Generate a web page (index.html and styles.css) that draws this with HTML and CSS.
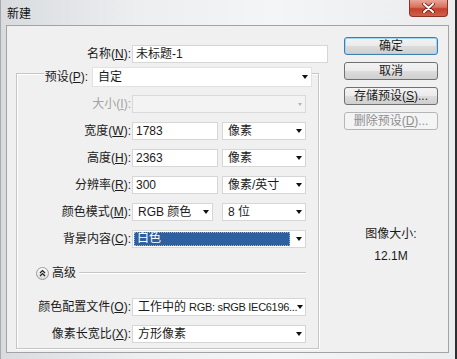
FILE: index.html
```html
<!DOCTYPE html>
<html>

<head>
  <title>新建</title>
  <link rel="stylesheet" href="styles.css">
</head>

<body>
  <div class="window">
    <div class="titlebar">
      <span class="title">新建</span>
      <div class="close-btn">
        <svg width="13" height="10" viewBox="0 0 13 10">
          <path d="M2 1 L11 9 M11 1 L2 9" stroke="#6b1a12" stroke-width="3.6" stroke-linecap="round" />
          <path d="M2 1 L11 9 M11 1 L2 9" stroke="#fff" stroke-width="2" stroke-linecap="round" />
        </svg>
      </div>
    </div>

    <div class="panel">
      <div class="main">
        <div class="row">
          <label class="lbl lbl-name">名称(<u>N</u>):</label>
          <div class="field field-name">未标题-1</div>
        </div>

        <div class="group">
          <div class="group-head">
            <label class="lbl lbl-preset">预设(<u>P</u>):</label>
            <div class="field select select-preset">自定<span class="arrow"></span></div>
          </div>

          <div class="row row-first">
            <label class="lbl lbl-group disabled">大小(<u>I</u>):</label>
            <div class="field select select-full is-disabled"><span class="arrow"></span></div>
          </div>
          <div class="row">
            <label class="lbl lbl-group">宽度(<u>W</u>):</label>
            <div class="field field-num">1783</div>
            <div class="field select select-unit">像素<span class="arrow"></span></div>
          </div>
          <div class="row">
            <label class="lbl lbl-group">高度(<u>H</u>):</label>
            <div class="field field-num">2363</div>
            <div class="field select select-unit">像素<span class="arrow"></span></div>
          </div>
          <div class="row">
            <label class="lbl lbl-group">分辨率(<u>R</u>):</label>
            <div class="field field-num">300</div>
            <div class="field select select-unit">像素/英寸<span class="arrow"></span></div>
          </div>
          <div class="row">
            <label class="lbl lbl-group">颜色模式(<u>M</u>):</label>
            <div class="field select select-mode">RGB 颜色<span class="arrow"></span></div>
            <div class="field select select-unit">8 位<span class="arrow"></span></div>
          </div>
          <div class="row">
            <label class="lbl lbl-group">背景内容(<u>C</u>):</label>
            <div class="field select select-full is-focused">
              <span class="highlight">白色</span><span class="arrow"></span>
            </div>
          </div>

          <div class="advanced">
            <svg class="adv-icon" width="13" height="13" viewBox="0 0 13 13">
              <defs>
                <linearGradient id="advg" x1="0" y1="0" x2="0" y2="1">
                  <stop offset="0" stop-color="#ffffff" />
                  <stop offset="1" stop-color="#d9d9d9" />
                </linearGradient>
              </defs>
              <circle cx="6.5" cy="6.5" r="6" fill="url(#advg)" stroke="#9a9a9a" />
              <path d="M4 6 L6.5 3.6 L9 6 M4 9 L6.5 6.6 L9 9" fill="none" stroke="#222" stroke-width="1.3" />
            </svg>
            <span class="adv-label">高级</span>
            <span class="adv-line"></span>
          </div>

          <div class="row row-profile">
            <label class="lbl lbl-group">颜色配置文件(<u>O</u>):</label>
            <div class="field select select-full">工作中的 <span class="profile-text">RGB: sRGB IEC6196...</span><span class="arrow"></span></div>
          </div>
          <div class="row">
            <label class="lbl lbl-group">像素长宽比(<u>X</u>):</label>
            <div class="field select select-full">方形像素<span class="arrow"></span></div>
          </div>
        </div>
      </div>

      <div class="side">
        <div class="btn btn-default">确定</div>
        <div class="btn">取消</div>
        <div class="btn">存储预设(<u>S</u>)...</div>
        <div class="btn btn-disabled">删除预设(<u>D</u>)...</div>

        <div class="size-info">
          <div>图像大小:</div>
          <div class="size-value">12.1M</div>
        </div>
      </div>
    </div>
  </div>
</body>

</html>
```

FILE: styles.css
```css
body {
  margin: 0;
  background: #e9ebee;
  font-family: "Liberation Sans", "Noto Sans CJK SC", sans-serif;
  font-size: 12px;
  color: #1a1a1a;
}

u {
  text-decoration: underline;
  text-underline-offset: 1px;
}

.window {
  width: 457px;
  height: 359px;
  box-sizing: border-box;
  border-left: 1px solid #a7abb0;
  border-right: 2px solid #2f2f2f;
  background: linear-gradient(90deg, #d9dcdf 0%, #eceef0 30%, #f4f5f6 60%, #eaecee 100%);
  display: flex;
  flex-direction: column;
}

/* title bar */
.titlebar {
  height: 25px;
  display: flex;
  align-items: flex-start;
  flex-shrink: 0;
}

.title {
  padding: 6px 0 0 6px;
  line-height: 16px;
  color: #111;
}

.close-btn {
  margin-left: auto;
  margin-right: 7px;
  width: 39px;
  height: 17px;
  box-sizing: border-box;
  border: 1px solid #8c3328;
  border-top: 0;
  border-radius: 0 0 4px 4px;
  background: linear-gradient(#e9a596 0%, #d9705d 45%, #c4402c 55%, #d0604a 100%);
  display: flex;
  align-items: center;
  justify-content: center;
}

/* main panel */
.panel {
  margin: 0 6px 0 5px;
  height: 328px;
  box-sizing: border-box;
  border: 1px solid #a3a3a3;
  background: #f0f0f0;
  display: flex;
}

.main {
  width: 322px;
  padding-top: 10px;
}

.row {
  display: flex;
  align-items: center;
  height: 18px;
  margin-top: 9px;
}

.lbl {
  flex-shrink: 0;
  text-align: right;
  line-height: 16px;
  white-space: nowrap;
}

.lbl.disabled {
  color: #a3a3a3;
}

.lbl-name {
  width: 124px;
}

.lbl-group {
  width: 114px;
}

.field {
  box-sizing: border-box;
  height: 18px;
  margin-left: 1px;
  padding-left: 3px;
  line-height: 16px;
  background: #fff;
  border: 1px solid #d6d6d6;
  white-space: nowrap;
  overflow: hidden;
}

.field-name {
  width: 196px;
}

.field-num {
  width: 86px;
}

.select {
  display: flex;
  align-items: center;
  padding-right: 3px;
  padding-left: 5px;
}

.arrow {
  margin-left: auto;
  flex-shrink: 0;
  width: 0;
  height: 0;
  border-left: 3.5px solid transparent;
  border-right: 3.5px solid transparent;
  border-top: 4px solid #111;
}

.select-unit {
  width: 84px;
  margin-left: 4px;
}

.select-mode {
  width: 81px;
  margin-right: 5px;
}

.select-full {
  width: 174px;
}

.select.is-disabled {
  background: #f3f3f3;
  border-color: #d9d9d9;
}

.select.is-disabled .arrow {
  border-left-width: 2.5px;
  border-right-width: 2.5px;
  border-top: 3px solid #b5b5b5;
}

.select.is-focused {
  padding-left: 1px;
}

.highlight {
  width: 156px;
  height: 14px;
  box-sizing: border-box;
  padding-left: 3px;
  line-height: 13px;
  color: #fff;
  background: #2e5f9f;
  outline: 1px dotted #9bb4d4;
  outline-offset: -1px;
}

.profile-text {
  margin-left: 3px;
  font-size: 11px;
  letter-spacing: -0.3px;
}

/* group box */
.group {
  margin: 10px 0 0 9px;
  width: 303px;
  box-sizing: border-box;
  border: 1px solid #c6c6c6;
  box-shadow: 1px 1px 0 #fff, inset 1px 1px 0 #fff;
  padding-bottom: 5px;
}

.group-head {
  display: flex;
  align-items: center;
  height: 20px;
  margin: -7px 0 0 27px;
}

.lbl-preset {
  width: 48px;
  box-sizing: border-box;
  padding-right: 4px;
  background: #f0f0f0;
}

.select-preset {
  width: 220px;
  height: 20px;
  margin-left: 0;
  border-color: #e2e2e2;
}

.row-first {
  margin-top: 8px;
}

.advanced {
  display: flex;
  align-items: center;
  height: 14px;
  margin: 18px 12px 0 19px;
}

.adv-label {
  margin-left: 3px;
  line-height: 14px;
}

.adv-line {
  flex: 1;
  margin-left: 3px;
  border-top: 1px solid #c6c6c6;
  border-bottom: 1px solid #fff;
}

.row-profile {
  margin-top: 18px;
}

/* right column */
.side {
  width: 94px;
  margin-left: 15px;
  padding-top: 11px;
}

.btn {
  box-sizing: border-box;
  height: 18px;
  margin-bottom: 7px;
  border: 1px solid #707070;
  border-radius: 3px;
  background: linear-gradient(#f3f3f3 0%, #ebebeb 48%, #dcdcdc 52%, #cfcfcf 100%);
  text-align: center;
  line-height: 16px;
  white-space: nowrap;
}

.btn-default {
  border-color: #3c7fb1;
  box-shadow: inset 0 0 0 1px #9fd6f3;
}

.btn-disabled {
  border-color: #b3b7ba;
  background: #f4f4f4;
  color: #8e8e8e;
}

.size-info {
  margin-top: 96px;
  text-align: center;
  line-height: 16px;
}

.size-value {
  margin-top: 6px;
}
```
